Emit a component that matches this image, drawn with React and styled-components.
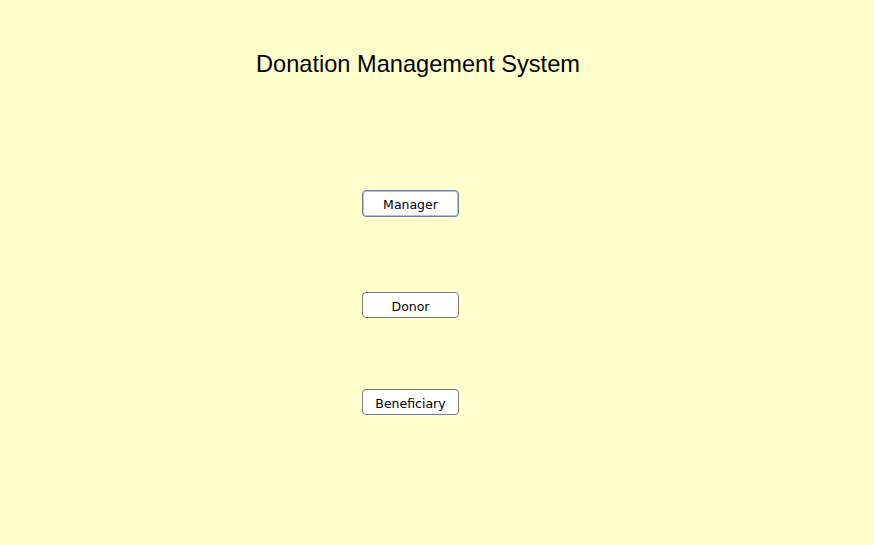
import React from "react";
import styled, { createGlobalStyle } from "styled-components";

const Global = createGlobalStyle`
  html, body { margin: 0; padding: 0; background: #ffffcc; }
  body { width: 874px; height: 545px; overflow: hidden; }
`;

const Page = styled.div`
  width: 874px;
  height: 545px;
  background: #ffffcc;
  box-sizing: border-box;
  padding: 50px 0 0 256px;
  display: flex;
  flex-direction: column;
`;

const Title = styled.h1`
  margin: 0;
  font-family: "Liberation Sans", Arial, sans-serif;
  font-weight: normal;
  font-size: 23.6px;
  line-height: 28px;
  color: #000;
`;

const ButtonColumn = styled.div`
  display: flex;
  flex-direction: column;
  align-items: flex-start;
  margin: 112px 0 0 106px;
`;

const Button = styled.button`
  width: 97px;
  height: ${(p) => (p.$focused ? 27 : 26)}px;
  margin-bottom: ${(p) => p.$gap}px;
  box-sizing: border-box;
  padding: 2px 0 0;
  background: #ffffff;
  border: 1px solid ${(p) => (p.$focused ? "#6f8096" : "#7a7a7a")};
  border-radius: 4px;
  box-shadow: ${(p) => (p.$focused ? "inset 0 0 0 1px #a9c6e4" : "none")};
  font-family: "DejaVu Sans", Tahoma, sans-serif;
  font-size: 12.5px;
  color: #000;
  cursor: pointer;
`;

export default function App() {
  return (
    <>
      <Global />
      <Page>
        <Title>Donation Management System</Title>
        <ButtonColumn>
          <Button $focused $gap={75}>Manager</Button>
          <Button $gap={71}>Donor</Button>
          <Button $gap={0}>Beneficiary</Button>
        </ButtonColumn>
      </Page>
    </>
  );
}
